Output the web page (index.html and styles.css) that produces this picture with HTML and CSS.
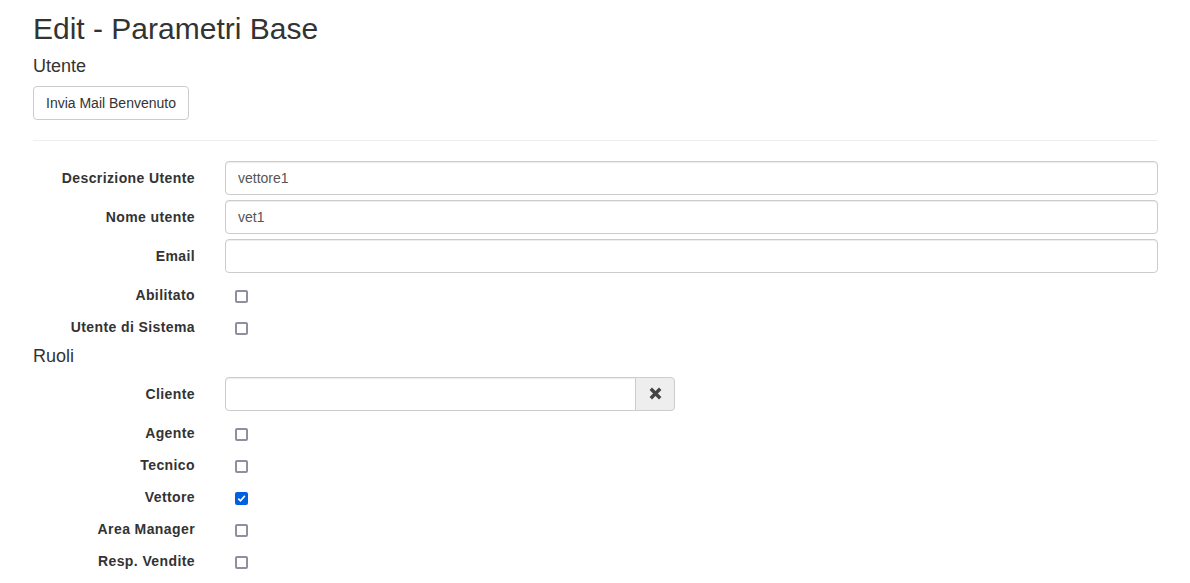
FILE: index.html
```html
<!DOCTYPE html>
<html lang="it">
<head>
<meta charset="utf-8">
<title>Edit - Parametri Base</title>
<link rel="stylesheet" href="styles.css">
</head>
<body>
<div class="page">
  <h2 class="title">Edit - Parametri Base</h2>
  <h4 class="section">Utente</h4>
  <button type="button" class="btn">Invia Mail Benvenuto</button>
  <hr class="sep">

  <form class="form">
    <div class="row">
      <label class="lbl">Descrizione Utente</label>
      <div class="ctl"><input class="input" type="text" value="vettore1"></div>
    </div>
    <div class="row">
      <label class="lbl">Nome utente</label>
      <div class="ctl"><input class="input" type="text" value="vet1"></div>
    </div>
    <div class="row">
      <label class="lbl">Email</label>
      <div class="ctl"><input class="input" type="text" value=""></div>
    </div>
    <div class="row">
      <label class="lbl">Abilitato</label>
      <div class="ctl chk"><input type="checkbox" class="cb"></div>
    </div>
    <div class="row">
      <label class="lbl">Utente di Sistema</label>
      <div class="ctl chk"><input type="checkbox" class="cb"></div>
    </div>

    <h4 class="section roles">Ruoli</h4>

    <div class="row">
      <label class="lbl">Cliente</label>
      <div class="ctl">
        <div class="group">
          <input class="input group-input" type="text" value="">
          <span class="addon">
            <svg width="13" height="13" viewBox="0 0 13 13" aria-hidden="true"><path d="M1.8 1.8 L11.2 11.2 M11.2 1.8 L1.8 11.2" stroke="#444" stroke-width="3.4" stroke-linecap="butt" fill="none"/></svg>
          </span>
        </div>
      </div>
    </div>
    <div class="row">
      <label class="lbl">Agente</label>
      <div class="ctl chk"><input type="checkbox" class="cb"></div>
    </div>
    <div class="row">
      <label class="lbl">Tecnico</label>
      <div class="ctl chk"><input type="checkbox" class="cb"></div>
    </div>
    <div class="row">
      <label class="lbl">Vettore</label>
      <div class="ctl chk"><input type="checkbox" class="cb" checked></div>
    </div>
    <div class="row">
      <label class="lbl">Area Manager</label>
      <div class="ctl chk"><input type="checkbox" class="cb"></div>
    </div>
    <div class="row">
      <label class="lbl">Resp. Vendite</label>
      <div class="ctl chk"><input type="checkbox" class="cb"></div>
    </div>
  </form>
</div>
</body>
</html>
```

FILE: styles.css
```css
html, body {
  margin: 0;
  padding: 0;
  background: #fff;
}

body {
  font-family: "Liberation Sans", Arial, Helvetica, sans-serif;
  font-size: 14px;
  line-height: 20px;
  color: #333;
}

.page {
  padding: 0 32px 0 33px;
}

.title {
  font-size: 30px;
  font-weight: 400;
  line-height: 33px;
  margin: 12px 0 0;
  color: #333;
}

.section {
  font-size: 18px;
  font-weight: 400;
  line-height: 19.8px;
  margin: 12px 0 9px;
  color: #333;
}

.section.roles {
  margin: 10px 0 10px;
}

.btn {
  display: inline-block;
  box-sizing: border-box;
  height: 34px;
  padding: 6px 12px;
  font-family: inherit;
  font-size: 14px;
  line-height: 20px;
  color: #333;
  background: #fff;
  border: 1px solid #ccc;
  border-radius: 4px;
  margin: 0;
  vertical-align: top;
}

.sep {
  border: 0;
  border-top: 1px solid #eee;
  margin: 20px 0;
  height: 0;
}

.form {
  margin: 0;
}

.row {
  display: grid;
  grid-template-columns: 162px 1fr;
  column-gap: 30px;
  margin-bottom: 5px;
}

.lbl {
  text-align: right;
  font-weight: 700;
  padding-top: 7px;
  line-height: 20px;
  letter-spacing: 0.4px;
  white-space: nowrap;
}

.ctl {
  min-width: 0;
}

.input {
  display: block;
  box-sizing: border-box;
  width: 100%;
  height: 34px;
  padding: 6px 12px;
  font-family: inherit;
  font-size: 14px;
  line-height: 20px;
  color: #555;
  background: #fff;
  border: 1px solid #ccc;
  border-radius: 4px;
  box-shadow: inset 0 1px 1px rgba(0, 0, 0, 0.075);
  margin: 0;
  outline: none;
}

.chk {
  height: 27px;
  box-sizing: border-box;
  padding-top: 7px;
}

.cb {
  -webkit-appearance: none;
  appearance: none;
  display: block;
  box-sizing: border-box;
  width: 13px;
  height: 13px;
  margin: 5px 0 0 10px;
  border: 2px solid #8f8f9d;
  border-radius: 2px;
  background: #fff;
}

.cb:checked {
  border-color: #0060df;
  background-color: #0060df;
  background-image: url("data:image/svg+xml,%3Csvg xmlns='http://www.w3.org/2000/svg' viewBox='0 0 9 9'%3E%3Cpath d='M1.3 4.6 L3.5 6.8 L7.8 1.9' stroke='white' stroke-width='1.6' fill='none'/%3E%3C/svg%3E");
  background-size: 9px 9px;
  background-position: center;
  background-repeat: no-repeat;
}

.group {
  display: flex;
  width: 450px;
}

.group-input {
  flex: 1 1 auto;
  width: auto;
  min-width: 0;
  border-top-right-radius: 0;
  border-bottom-right-radius: 0;
}

.addon {
  display: flex;
  align-items: center;
  justify-content: center;
  box-sizing: border-box;
  width: 40px;
  height: 34px;
  margin-left: -1px;
  background: #eee;
  border: 1px solid #ccc;
  border-radius: 0 4px 4px 0;
}
```
